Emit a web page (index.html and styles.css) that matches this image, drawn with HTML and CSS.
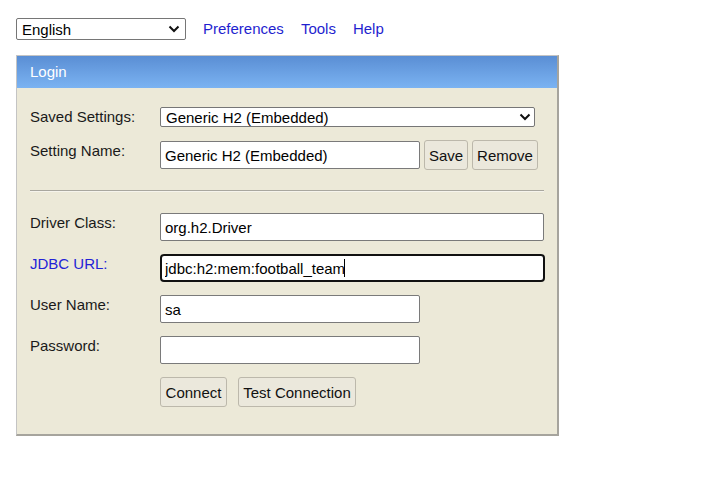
FILE: index.html
```html
<!DOCTYPE html>
<html lang="en">
<head>
<meta charset="utf-8">
<title>H2 Console</title>
<link rel="stylesheet" href="styles.css">
</head>
<body>
<div class="page">
  <div class="toolbar">
    <span class="sel sel-lang">
      <select class="lang"><option>English</option></select>
      <svg class="chev" width="12" height="8" viewBox="0 0 12 8"><path d="M1.5 1.5 L6 6 L10.5 1.5" fill="none" stroke="#111" stroke-width="2"/></svg>
    </span>
    <nav class="links">
      <a href="#">Preferences</a>
      <a href="#">Tools</a>
      <a href="#">Help</a>
    </nav>
  </div>

  <form class="login">
    <div class="login-head">Login</div>
    <div class="login-body">
      <div class="row row-saved">
        <label class="lbl">Saved Settings:</label>
        <span class="sel sel-saved">
          <select class="saved"><option>Generic H2 (Embedded)</option></select>
          <svg class="chev" width="12" height="8" viewBox="0 0 12 8"><path d="M1.5 1.5 L6 6 L10.5 1.5" fill="none" stroke="#111" stroke-width="2"/></svg>
        </span>
      </div>
      <div class="row row-name">
        <label class="lbl lbl-btnrow">Setting Name:</label>
        <input class="field short" type="text" value="Generic H2 (Embedded)">
        <button type="button" class="btn btn-save">Save</button>
        <button type="button" class="btn btn-remove">Remove</button>
      </div>
      <div class="sep"><hr class="rule"></div>
      <div class="row">
        <label class="lbl">Driver Class:</label>
        <input class="field long" type="text" value="org.h2.Driver">
      </div>
      <div class="row">
        <a class="lbl lbl-link" href="#">JDBC URL:</a>
        <span class="focus-wrap">
          <input class="field long focused" type="text" value="jdbc:h2:mem:football_team">
          <span class="caret"></span>
        </span>
      </div>
      <div class="row">
        <label class="lbl">User Name:</label>
        <input class="field short" type="text" value="sa">
      </div>
      <div class="row">
        <label class="lbl">Password:</label>
        <input class="field short" type="password" value="">
      </div>
      <div class="row row-actions">
        <span class="lbl"></span>
        <button type="button" class="btn btn-connect">Connect</button>
        <button type="button" class="btn btn-test">Test Connection</button>
      </div>
    </div>
  </form>
</div>
</body>
</html>
```

FILE: styles.css
```css
html, body {
  margin: 0;
  padding: 0;
  background: #ffffff;
}

body {
  font-family: "Liberation Sans", Arial, sans-serif;
  font-size: 15px;
  color: #1a1a1a;
}

.page {
  padding: 18px 16px;
}

.toolbar {
  display: flex;
  align-items: center;
  height: 22px;
}

.sel {
  position: relative;
  display: inline-block;
}

.sel select {
  -webkit-appearance: none;
  appearance: none;
  display: block;
  margin: 0;
  font-family: "Liberation Sans", Arial, sans-serif;
  font-size: 15px;
  color: #000;
  background: #fff;
  border: 1px solid #767676;
  border-radius: 2px;
  box-sizing: border-box;
}

.sel .chev {
  position: absolute;
  pointer-events: none;
}

.lang {
  width: 170px;
  height: 22px;
  padding: 0 0 0 5px;
}

.sel-lang .chev {
  right: 6px;
  top: 7px;
}

.links {
  display: flex;
  gap: 17px;
  margin-left: 17px;
  margin-bottom: 2px;
}

.links a {
  color: #1f1fcf;
  text-decoration: none;
}

.login {
  margin: 15px 0 0;
  width: 543px;
  box-sizing: border-box;
  border-top: 1px solid #c4c4c4;
  border-left: 1px solid #c4c4c4;
  border-right: 2px solid #a6a49d;
  border-bottom: 2px solid #a6a49d;
}

.login-head {
  height: 32px;
  line-height: 32px;
  padding-left: 13px;
  color: #ffffff;
  background: linear-gradient(to bottom, #5a8ed4, #7bb3f2);
}

.login-body {
  background: #ece9d8;
  padding: 19px 13px 27px 13px;
  display: flex;
  flex-direction: column;
  gap: 13px;
}

.row {
  display: flex;
  align-items: flex-start;
}

.lbl {
  flex: none;
  width: 130px;
  padding-top: 1px;
  line-height: 17px;
  color: #1a1a1a;
}

.lbl-btnrow {
  padding-top: 2px;
}

.lbl-link {
  color: #2323d6;
  text-decoration: none;
}

.saved {
  width: 375px;
  height: 20px;
  padding: 0 0 0 5px;
}

.sel-saved .chev {
  right: 4px;
  top: 6px;
}

.field {
  box-sizing: border-box;
  height: 28px;
  margin: 0;
  padding: 0 4px;
  font-family: "Liberation Sans", Arial, sans-serif;
  font-size: 15px;
  color: #000;
  background: #fff;
  border: 1px solid #7a7a7a;
  border-radius: 2px;
  outline: none;
}

.row-name .field {
  margin-top: 1px;
}

.short {
  width: 260px;
}

.long {
  width: 385px;
}

.focus-wrap {
  position: relative;
  display: inline-block;
}

.focused {
  display: block;
  border: 2px solid #111;
  border-radius: 4px;
  padding: 0 3px;
}

.caret {
  position: absolute;
  left: 184px;
  top: 5px;
  width: 1px;
  height: 18px;
  background: #000;
}

.btn {
  box-sizing: border-box;
  height: 30px;
  margin: 0;
  padding: 0 4px;
  font-family: "Liberation Sans", Arial, sans-serif;
  font-size: 15px;
  color: #111;
  background: #ebe8dc;
  border: 1px solid #bcb8ab;
  border-radius: 3px;
}

.btn-save {
  width: 44px;
  margin-left: 4px;
}

.btn-remove {
  width: 66px;
  margin-left: 4px;
}

.btn-connect {
  width: 67px;
}

.btn-test {
  width: 118px;
  margin-left: 11px;
}

.sep {
  height: 17px;
  display: flex;
  align-items: flex-start;
}

.rule {
  width: 100%;
  margin: 7px 0 0;
  border: 0;
  border-top: 1px solid #a9a79f;
  border-bottom: 1px solid #f6f4ec;
  height: 0;
}
```
